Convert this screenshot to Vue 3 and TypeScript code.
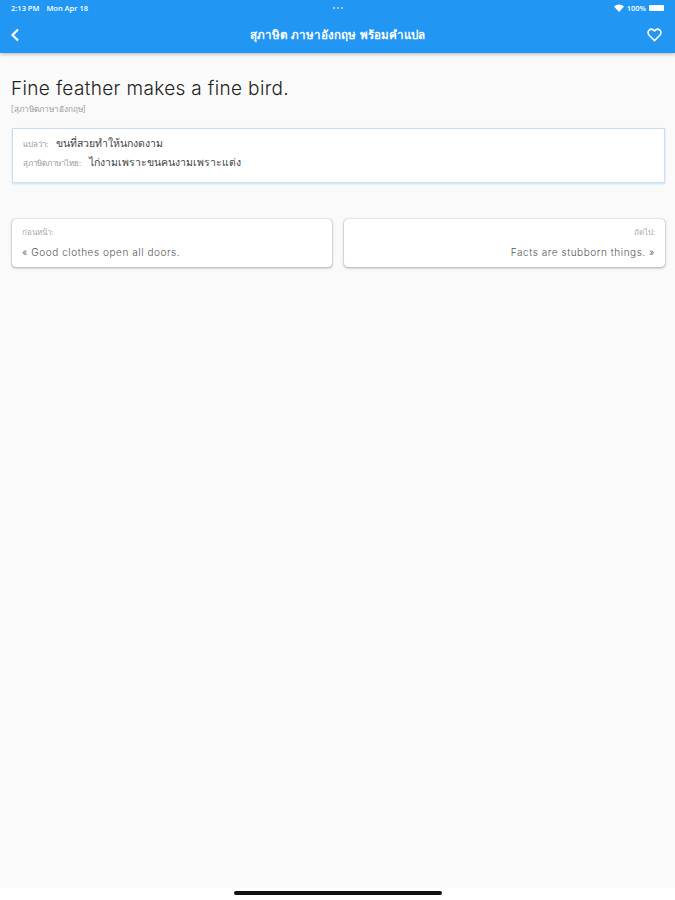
<script setup lang="ts">
const neighbours = [
  { label: 'ก่อนหน้า:', text: '« Good clothes open all doors.', next: false },
  { label: 'ถัดไป:', text: 'Facts are stubborn things. »', next: true },
]
</script>

<template>
  <div class="page">
    <header class="appbar">
      <div class="status">
        <div class="status-left">
          <span>2:13 PM</span>
          <span>Mon Apr 18</span>
        </div>
        <div class="dots"><i></i><i></i><i></i></div>
        <div class="status-right">
          <svg width="10" height="8" viewBox="0 0 10 8">
            <path d="M0 2.6C2.8-.2 7.2-.2 10 2.6L5 8z" fill="#fff" />
          </svg>
          <span>100%</span>
          <span class="battery"></span>
        </div>
      </div>
      <div class="toolbar">
        <svg class="back" width="10" height="14" viewBox="0 0 10 14">
          <path d="M8 1.500 2.500 7 8 12.500" fill="none" stroke="#fff" stroke-width="2.200" />
        </svg>
        <h1>สุภาษิต ภาษาอังกฤษ พร้อมคำแปล</h1>
        <svg class="heart" width="15" height="14" viewBox="0 0 17 16">
          <path
            d="M8.500 14.400 2.400 8.300C.6 6.400.8 3.800 2.400 2.400 4 1 6.500 1.200 8.500 3.400c2-2.200 4.500-2.400 6.100-1 1.600 1.400 1.800 4 0 5.900z"
            fill="none"
            stroke="#fff"
            stroke-width="1.800"
            stroke-linejoin="round"
          />
        </svg>
      </div>
    </header>

    <main class="content">
      <h2>Fine feather makes a fine bird.</h2>
      <p class="category">[สุภาษิตภาษาอังกฤษ]</p>

      <section class="meaning">
        <p><span class="key">แปลว่า:</span> ขนที่สวยทำให้นกงดงาม</p>
        <p><span class="key">สุภาษิตภาษาไทย:</span> ไก่งามเพราะขนคนงามเพราะแต่ง</p>
      </section>

      <nav class="neighbours">
        <a v-for="item in neighbours" :key="item.label" class="card" :class="{ next: item.next }">
          <span class="card-label">{{ item.label }}</span>
          <span class="card-text">{{ item.text }}</span>
        </a>
      </nav>
    </main>

    <footer class="home">
      <span class="home-bar"></span>
    </footer>
  </div>
</template>

<style scoped>
.page {
  width: 675px;
  height: 900px;
  display: flex;
  flex-direction: column;
  background: #fafafa;
  font-family: "Open Sans", "Noto Sans", sans-serif;
  overflow: hidden;
}

.appbar {
  height: 53px;
  flex: none;
  background: #2196f3;
  color: #fff;
  box-shadow: 0 1px 4px rgba(0, 0, 0, 0.3);
  position: relative;
}

.status {
  height: 16px;
  padding: 0 11px;
  display: grid;
  grid-template-columns: 1fr auto 1fr;
  align-items: center;
  font-size: 7.5px;
  font-weight: 600;
}

.status-left {
  display: flex;
  gap: 7px;
}

.dots {
  display: flex;
  gap: 2px;
}

.dots i {
  width: 2px;
  height: 2px;
  border-radius: 50%;
  background: rgba(255, 255, 255, 0.75);
}

.status-right {
  display: flex;
  align-items: center;
  justify-content: flex-end;
  gap: 3px;
}

.battery {
  width: 15px;
  height: 6px;
  border-radius: 1px;
  background: #fff;
}

.toolbar {
  height: 37px;
  padding: 0 13px;
  display: grid;
  grid-template-columns: 1fr auto 1fr;
  align-items: center;
}

.back {
  margin-left: -3px;
}

.heart {
  justify-self: end;
}

.toolbar h1 {
  margin: 0;
  font-size: 11.6px;
  font-weight: 700;
}

.content {
  flex: 1;
  padding: 24px 10px 0 12px;
}

h2 {
  margin: 0 0 0 -1px;
  font-family: "Inter", sans-serif;
  font-size: 19px;
  line-height: 23px;
  font-weight: 300;
  letter-spacing: 0.35px;
  color: #222;
}

.category {
  margin: 3px 0 0 -1px;
  font-size: 8.2px;
  line-height: 12px;
  color: #999;
}

.meaning {
  margin-top: 13px;
  height: 55px;
  padding: 5px 10px;
  display: flex;
  flex-direction: column;
  box-sizing: border-box;
  background: #fff;
  border: 1px solid #c6dff5;
  box-shadow: 0 1px 2px rgba(33, 150, 243, 0.25);
}

.meaning p {
  margin: 0;
  font-size: 10.5px;
  line-height: 18px;
  color: #444;
}

.key {
  font-size: 8px;
  margin-right: 5px;
  color: #999;
}

.neighbours {
  margin-top: 36px;
  display: grid;
  grid-template-columns: 320px 321px;
  gap: 12px;
}

.card {
  height: 48px;
  padding: 6px 10px;
  box-sizing: border-box;
  display: flex;
  flex-direction: column;
  gap: 7px;
  background: #fff;
  border-radius: 4px;
  box-shadow: 0 0 1px rgba(0, 0, 0, 0.4), 0 1px 3px rgba(0, 0, 0, 0.3);
}

.card.next {
  align-items: flex-end;
}

.card-label {
  font-size: 8px;
  line-height: 13px;
  color: #aaa;
}

.card-text {
  font-family: "Inter", sans-serif;
  font-size: 10px;
  line-height: 14px;
  font-weight: 300;
  letter-spacing: 0.55px;
  color: #555;
}

.home {
  height: 12px;
  flex: none;
  background: #fff;
  display: flex;
  justify-content: center;
  padding-top: 3px;
  box-sizing: border-box;
}

.home-bar {
  width: 208px;
  height: 4px;
  border-radius: 2px;
  background: #111;
}
</style>
